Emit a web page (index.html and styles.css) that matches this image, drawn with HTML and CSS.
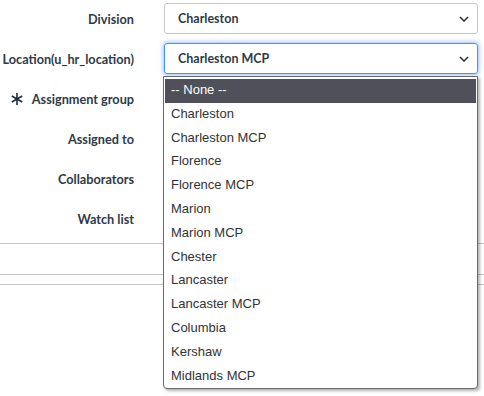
FILE: index.html
```html
<!DOCTYPE html>
<html lang="en">
<head>
  <meta charset="UTF-8">
  <title>Incident form</title>
  <link rel="stylesheet" href="styles.css">
</head>
<body>
  <div class="form">
    <div class="row">
      <label class="field-label">Division</label>
      <div class="select">
        <span>Charleston</span>
        <svg class="chevron" width="10" height="6" viewBox="0 0 10 6"><path d="M1 1l4 4 4-4" fill="none" stroke="#333" stroke-width="1.6"/></svg>
      </div>
    </div>
    <div class="row">
      <label class="field-label">Location(u_hr_location)</label>
      <div class="select focused">
        <span>Charleston MCP</span>
        <svg class="chevron" width="10" height="6" viewBox="0 0 10 6"><path d="M1 1l4 4 4-4" fill="none" stroke="#333" stroke-width="1.6"/></svg>
      </div>
    </div>
    <div class="row">
      <label class="field-label mandatory">
        <svg class="star" width="12" height="12" viewBox="0 0 12 12"><path d="M6 0v12M0.8 3l10.4 6M0.8 9l10.4-6" stroke="#1e2d3b" stroke-width="1.6"/></svg>
        Assignment group
      </label>
      <div class="field"></div>
    </div>
    <div class="row">
      <label class="field-label">Assigned to</label>
      <div class="field"></div>
    </div>
    <div class="row">
      <label class="field-label">Collaborators</label>
      <div class="field"></div>
    </div>
    <div class="row">
      <label class="field-label">Watch list</label>
      <div class="field"></div>
    </div>
    <div class="divider"></div>
    <div class="divider second"></div>
    <div class="divider third"></div>
  </div>

  <ul class="dropdown">
    <li class="active">-- None --</li>
    <li>Charleston</li>
    <li>Charleston MCP</li>
    <li>Florence</li>
    <li>Florence MCP</li>
    <li>Marion</li>
    <li>Marion MCP</li>
    <li>Chester</li>
    <li>Lancaster</li>
    <li>Lancaster MCP</li>
    <li>Columbia</li>
    <li>Kershaw</li>
    <li>Midlands MCP</li>
  </ul>
</body>
</html>
```

FILE: styles.css
```css
body {
  margin: 0;
  font-family: Lato, "Open Sans", sans-serif;
  background-color: #fff;
  color: #2e3a46;
}
.form {
  padding-top: 3px;
}
.row {
  display: grid;
  grid-template-columns: 134px 314px;
  column-gap: 30px;
  height: 31px;
  margin-bottom: 9px;
}
.field-label {
  display: flex;
  align-items: center;
  justify-content: flex-end;
  font-size: 12.7px;
  font-weight: 700;
  white-space: nowrap;
}
.mandatory .star {
  margin-right: 9px;
}
.select {
  display: flex;
  align-items: center;
  justify-content: space-between;
  box-sizing: border-box;
  border: 1px solid #c8c8cc;
  border-radius: 3px;
  padding: 0 8px 0 13px;
  font-size: 12.5px;
  font-weight: 700;
}
.select.focused {
  border-color: #4a90f0;
  box-shadow: 0 0 4px 1px rgba(80, 150, 255, 0.6);
}
.divider {
  border-top: 1px solid #c4c4c4;
  margin-top: 8px;
  height: 30px;
}
.divider.second {
  margin-top: 0;
  height: 9px;
}
.divider.third {
  margin-top: 0;
}
.dropdown {
  position: absolute;
  top: 76px;
  left: 163px;
  width: 315px;
  height: 313px;
  box-sizing: border-box;
  margin: 0;
  padding: 2px 1px 0;
  list-style: none;
  background-color: #fff;
  border: 1px solid #6a6a6a;
  border-radius: 0 0 4px 4px;
  box-shadow: 2px 2px 3px rgba(0, 0, 0, 0.3);
  font-family: "Liberation Sans", Arial, sans-serif;
  font-size: 13px;
  color: #333;
}
.dropdown li {
  height: 23.8px;
  line-height: 22px;
  padding-left: 6px;
}
.dropdown li.active {
  background-color: #50505a;
  color: #fff;
}
```
